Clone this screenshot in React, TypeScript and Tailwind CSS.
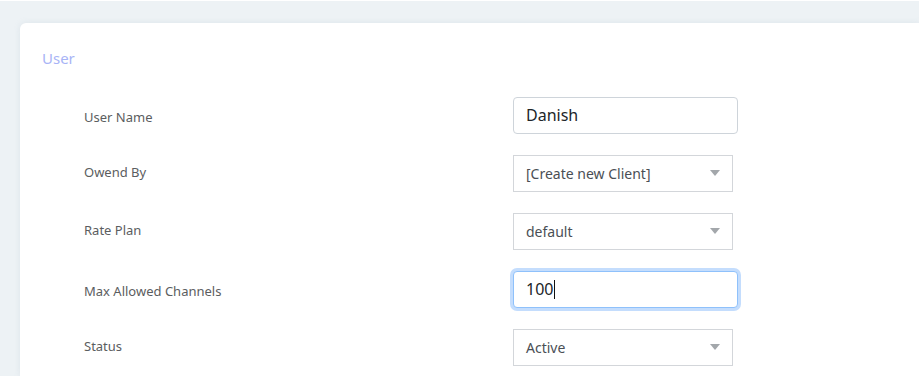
type Field = {
  label: string;
  kind: 'input' | 'select' | 'focused';
  value: string;
};

const fields: Field[] = [
  { label: 'User Name', kind: 'input', value: 'Danish' },
  { label: 'Owend By', kind: 'select', value: '[Create new Client]' },
  { label: 'Rate Plan', kind: 'select', value: 'default' },
  { label: 'Max Allowed Channels', kind: 'focused', value: '100' },
  { label: 'Status', kind: 'select', value: 'Active' },
];

function Caret() {
  return (
    <svg width="10" height="6" viewBox="0 0 10 6" className="shrink-0">
      <path d="M0 0h10L5 6z" fill="#a3a7ab" />
    </svg>
  );
}

function Control({ field }: { field: Field }) {
  if (field.kind === 'select') {
    return (
      <div className="flex h-[37px] w-[220px] items-center justify-between border border-[#d3d6da] bg-white pl-3 pr-3 text-[14px] text-[#4a4f55]">
        <span>{field.value}</span>
        <Caret />
      </div>
    );
  }

  const focused = field.kind === 'focused';
  return (
    <div
      className={`flex h-[37px] w-[225px] items-center rounded-[4px] border bg-white px-3 text-[16px] text-[#212529] ${
        focused ? 'border-[#8fc1fb] shadow-[0_0_0_3px_#c4ddfd]' : 'border-[#ced4da]'
      }`}
    >
      <span>{field.value}</span>
      {focused ? <span className="ml-px h-[19px] w-px bg-[#111]" /> : null}
    </div>
  );
}

export default function App() {
  return (
    <div
      className="h-[376px] w-[919px] overflow-hidden border-t border-white bg-[#edf2f5] pl-5 pt-[22px]"
      style={{ fontFamily: '"Noto Sans", "Open Sans", sans-serif' }}
    >
      <div className="h-full rounded-tl-[6px] bg-white pt-[25px] pl-[22px] shadow-[0_0_6px_rgba(150,170,190,0.18)]">
        <h2 className="text-[15px] leading-[20px] text-[#a8b4f6]">User</h2>

        <div className="mt-[18px]">
          {fields.map((field) => (
            <div key={field.label} className="grid h-[58px] grid-cols-[429px_1fr] items-center pl-[42px]">
              <span
                className={`text-[13px] text-[#5b5d60] ${field.kind === 'select' ? '-mt-[1px]' : 'mt-[5px]'}`}
              >
                {field.label}
              </span>
              <Control field={field} />
            </div>
          ))}
        </div>
      </div>
    </div>
  );
}
